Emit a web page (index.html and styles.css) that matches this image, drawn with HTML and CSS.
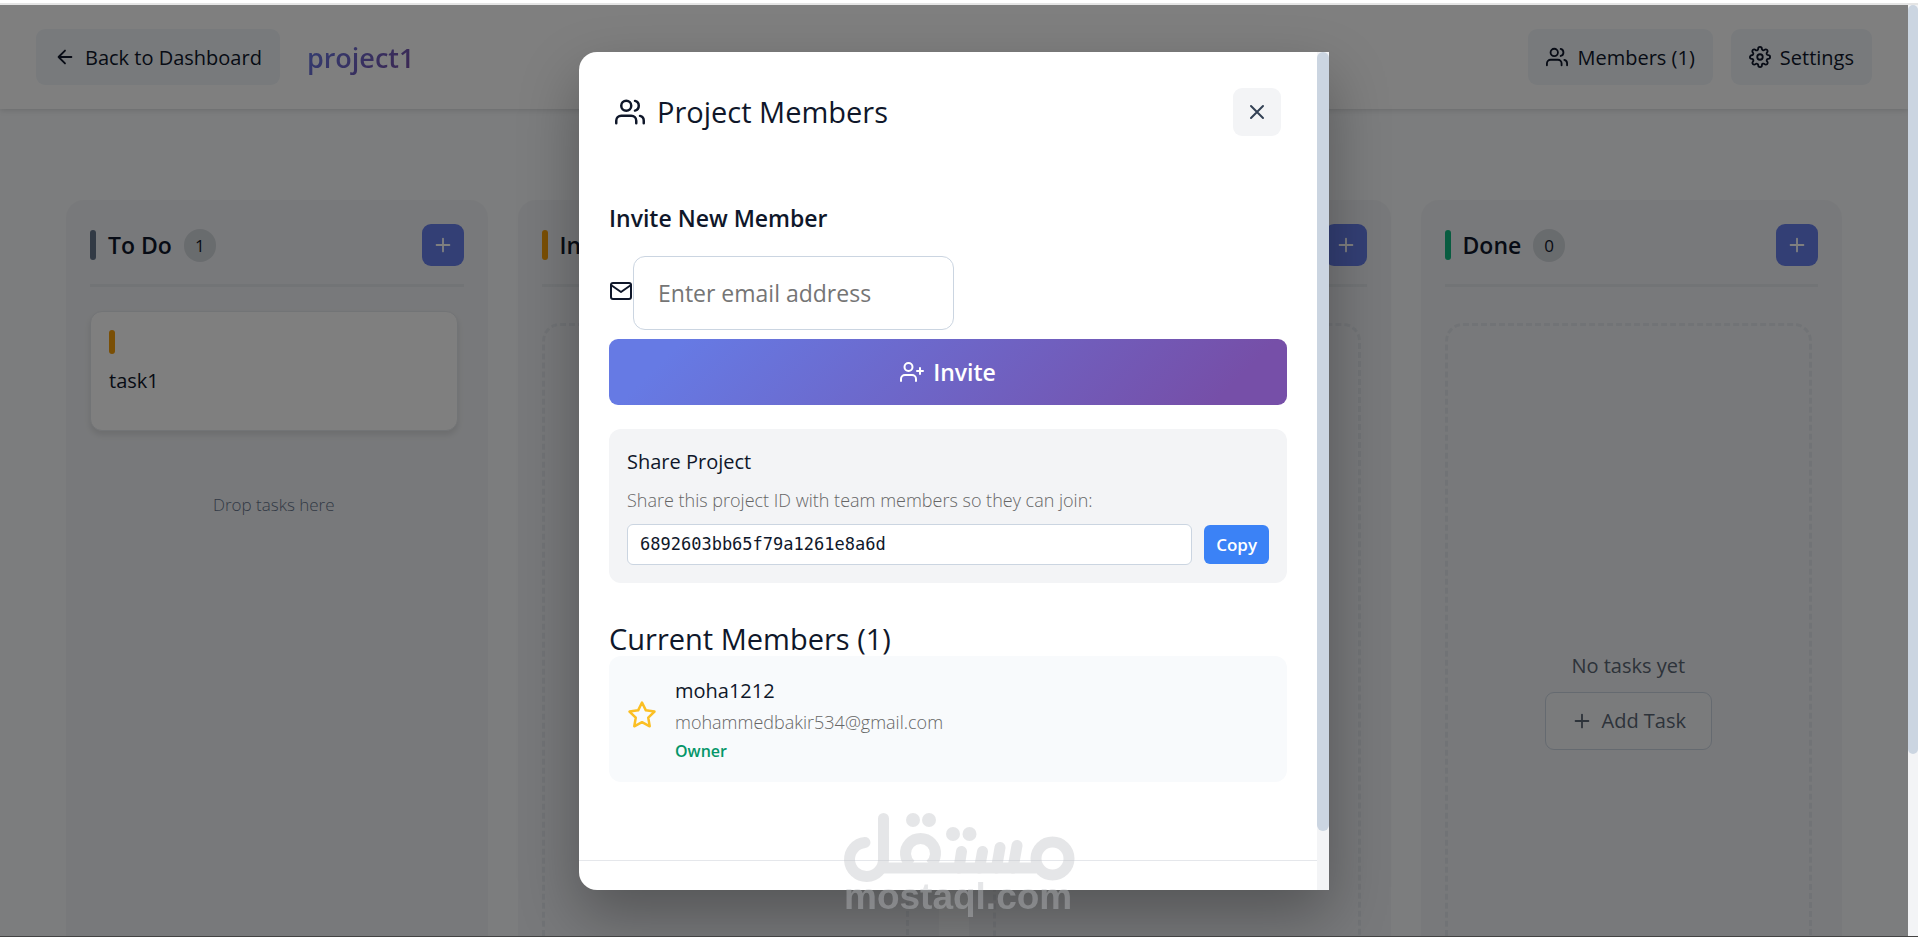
FILE: index.html
```html
<!DOCTYPE html>
<html lang="en">
  <head>
    <meta charset="UTF-8" />
    <meta name="viewport" content="width=device-width, initial-scale=1.0" />
    <title>project1</title>
    <link rel="stylesheet" href="styles.css" />
  </head>
  <body>
    <svg class="icon-defs" aria-hidden="true">
      <symbol id="icon-users" viewBox="0 0 24 24">
        <path d="M17 21v-2a4 4 0 0 0-4-4H5a4 4 0 0 0-4 4v2" />
        <circle cx="9" cy="7" r="4" />
        <path d="M23 21v-2a4 4 0 0 0-3-3.87" />
        <path d="M16 3.13a4 4 0 0 1 0 7.75" />
      </symbol>
      <symbol id="icon-plus" viewBox="0 0 24 24">
        <path d="M12 5v14M5 12h14" />
      </symbol>
    </svg>

    <div class="window">
      <div class="page">
        <header class="board-header">
          <div class="header-group">
            <button type="button" class="header-button">
              <svg class="icon" viewBox="0 0 24 24">
                <path d="M19 12H5M12 19l-7-7 7-7" />
              </svg>
              Back to Dashboard
            </button>
            <h1 class="project-title">project1</h1>
          </div>
          <div class="header-group">
            <button type="button" class="header-button">
              <svg class="icon"><use href="#icon-users" /></svg>
              Members (1)
            </button>
            <button type="button" class="header-button">
              <svg class="icon" viewBox="0 0 24 24">
                <circle cx="12" cy="12" r="3" />
                <path d="M19.4 15a1.65 1.65 0 0 0 .33 1.82l.06.06a2 2 0 0 1 0 2.83 2 2 0 0 1-2.83 0l-.06-.06a1.65 1.65 0 0 0-1.82-.33 1.65 1.65 0 0 0-1 1.51V21a2 2 0 0 1-2 2 2 2 0 0 1-2-2v-.09A1.65 1.65 0 0 0 9 19.4a1.65 1.65 0 0 0-1.82.33l-.06.06a2 2 0 0 1-2.83 0 2 2 0 0 1 0-2.83l.06-.06a1.65 1.65 0 0 0 .33-1.82 1.65 1.65 0 0 0-1.51-1H3a2 2 0 0 1-2-2 2 2 0 0 1 2-2h.09A1.65 1.65 0 0 0 4.6 9a1.65 1.65 0 0 0-.33-1.82l-.06-.06a2 2 0 0 1 0-2.83 2 2 0 0 1 2.83 0l.06.06a1.65 1.65 0 0 0 1.82.33H9a1.65 1.65 0 0 0 1-1.51V3a2 2 0 0 1 2-2 2 2 0 0 1 2 2v.09a1.65 1.65 0 0 0 1 1.51 1.65 1.65 0 0 0 1.82-.33l.06-.06a2 2 0 0 1 2.83 0 2 2 0 0 1 0 2.83l-.06.06a1.65 1.65 0 0 0-.33 1.82V9a1.65 1.65 0 0 0 1.51 1H21a2 2 0 0 1 2 2 2 2 0 0 1-2 2h-.09a1.65 1.65 0 0 0-1.51 1z" />
              </svg>
              Settings
            </button>
          </div>
        </header>

        <main class="board">
          <section class="column">
            <div class="column-header">
              <span class="column-bar todo"></span>
              <h2>To Do</h2>
              <span class="count">1</span>
              <button type="button" class="add-button" aria-label="Add task">
                <svg class="icon"><use href="#icon-plus" /></svg>
              </button>
            </div>
            <div class="column-body">
              <article class="task-card">
                <span class="priority"></span>
                <h3>task1</h3>
              </article>
              <p class="drop-hint">Drop tasks here</p>
            </div>
          </section>

          <section class="column">
            <div class="column-header">
              <span class="column-bar progress"></span>
              <h2>In Progress</h2>
              <span class="count">0</span>
              <button type="button" class="add-button" aria-label="Add task">
                <svg class="icon"><use href="#icon-plus" /></svg>
              </button>
            </div>
            <div class="column-body">
              <div class="empty-column"></div>
            </div>
          </section>

          <section class="column">
            <div class="column-header">
              <span class="column-bar review"></span>
              <h2>Review</h2>
              <span class="count">0</span>
              <button type="button" class="add-button" aria-label="Add task">
                <svg class="icon"><use href="#icon-plus" /></svg>
              </button>
            </div>
            <div class="column-body">
              <div class="empty-column"></div>
            </div>
          </section>

          <section class="column">
            <div class="column-header">
              <span class="column-bar done"></span>
              <h2>Done</h2>
              <span class="count">0</span>
              <button type="button" class="add-button" aria-label="Add task">
                <svg class="icon"><use href="#icon-plus" /></svg>
              </button>
            </div>
            <div class="column-body">
              <div class="empty-column">
                <p>No tasks yet</p>
                <button type="button" class="add-task">
                  <svg class="icon"><use href="#icon-plus" /></svg>
                  Add Task
                </button>
              </div>
            </div>
          </section>
        </main>

        <div class="overlay">
          <div class="modal" role="dialog" aria-labelledby="modal-title">
            <div class="modal-content">
              <div class="modal-header">
                <h2 id="modal-title" class="modal-heading">
                  <svg class="icon"><use href="#icon-users" /></svg>
                  Project Members
                </h2>
                <button type="button" class="close-button" aria-label="Close">
                  <svg class="icon" viewBox="0 0 24 24">
                    <path d="M18 6L6 18M6 6l12 12" />
                  </svg>
                </button>
              </div>

              <div class="modal-body">
                <form class="invite-form">
                  <h3>Invite New Member</h3>
                  <div class="email-row">
                    <label for="email" aria-label="Email">
                      <svg class="icon" viewBox="0 0 24 24">
                        <path d="M4 4h16c1.1 0 2 .9 2 2v12c0 1.1-.9 2-2 2H4c-1.1 0-2-.9-2-2V6c0-1.1.9-2 2-2z" />
                        <path d="M22 6l-10 7L2 6" />
                      </svg>
                    </label>
                    <input id="email" type="email" placeholder="Enter email address" />
                  </div>
                  <button type="button" class="invite-button">
                    <svg class="icon" viewBox="0 0 24 24">
                      <path d="M16 21v-2a4 4 0 0 0-4-4H5a4 4 0 0 0-4 4v2" />
                      <circle cx="8.5" cy="7" r="4" />
                      <path d="M20 8v6M23 11h-6" />
                    </svg>
                    Invite
                  </button>
                </form>

                <div class="share-box">
                  <h4>Share Project</h4>
                  <p>Share this project ID with team members so they can join:</p>
                  <div class="share-row">
                    <code>6892603bb65f79a1261e8a6d</code>
                    <button type="button" class="copy-button">Copy</button>
                  </div>
                </div>

                <h3 class="modal-heading">Current Members (1)</h3>
                <div class="member">
                  <svg class="icon star" viewBox="0 0 24 24">
                    <path d="M12 2l3.09 6.26L22 9.27l-5 4.87 1.18 6.88L12 17.77l-6.18 3.25L7 14.14 2 9.27l6.91-1.01L12 2z" />
                  </svg>
                  <div class="member-info">
                    <span class="member-name">moha1212</span>
                    <span class="member-email">mohammedbakir534@gmail.com</span>
                    <span class="member-role">Owner</span>
                  </div>
                </div>
              </div>
              <div class="modal-footer"></div>
            </div>
            <div class="scrollbar modal-scrollbar"><div class="thumb"></div></div>
          </div>
        </div>
      </div>
      <div class="scrollbar page-scrollbar"><div class="thumb"></div></div>

      <div class="watermark">
        <svg viewBox="0 0 230 62" fill="none" stroke="currentColor" stroke-width="11">
          <path d="M21 29.500a17 17 0 1 0 18.500 17V5.500" stroke-linecap="round" />
          <path d="M34 55h158" />
          <path d="M67 52a15 15 0 1 1 19 0" />
          <path d="M115 55l2.500-16.500M135.500 55l3-16.500M152.500 55l3.500-20.500M169 55l4-22.500" stroke-linecap="round" />
          <circle cx="208.500" cy="45.500" r="16.500" />
          <g fill="currentColor" stroke="none">
            <circle cx="69" cy="7" r="7" />
            <circle cx="85" cy="7" r="7" />
            <circle cx="109" cy="21" r="7" />
            <circle cx="125.500" cy="21" r="7" />
          </g>
        </svg>
        <span>mostaql.com</span>
      </div>
    </div>
  </body>
</html>
```

FILE: styles.css
```css
* {
  box-sizing: border-box;
}

body {
  margin: 0;
  padding-top: 3px;
  background: #fff;
  color: #0f172a;
  font-family: "Open Sans", "Noto Sans", sans-serif;
}

h1,
h2,
h3,
h4,
p {
  margin: 0;
}

button {
  border: none;
  color: inherit;
  font-family: inherit;
  cursor: pointer;
}

.icon-defs {
  display: none;
}

.icon {
  width: 22px;
  height: 22px;
  flex: none;
  display: block;
  fill: none;
  stroke: currentColor;
  stroke-width: 2;
  stroke-linecap: round;
  stroke-linejoin: round;
}

.window {
  position: relative;
  display: flex;
  height: calc(100vh - 3px);
  border-top: 2px solid #e5e5e5;
  border-bottom: 1px solid #444;
  overflow: hidden;
}

.page {
  position: relative;
  flex: 1;
  overflow: hidden;
  background: #f8fafc;
}

/* header */
.board-header {
  display: flex;
  justify-content: space-between;
  align-items: center;
  padding: 24px 36px;
  background: #fff;
  box-shadow: 0 1px 6px rgba(0, 0, 0, 0.15);
}

.header-group {
  display: flex;
  align-items: center;
  gap: 18px;
}

.header-button {
  display: flex;
  align-items: center;
  gap: 9px;
  height: 56px;
  padding: 0 18px;
  border-radius: 9px;
  background: #f1f5f9;
  font-size: 20px;
  font-weight: 500;
}

.project-title {
  padding-left: 9px;
  font-size: 27px;
  font-weight: 600;
  background: linear-gradient(135deg, #667eea 0%, #764ba2 100%);
  -webkit-background-clip: text;
  background-clip: text;
  color: transparent;
}

/* board */
.board {
  display: grid;
  grid-template-columns: repeat(4, 1fr);
  gap: 30px;
  padding: 91px 66px 0;
}

.column {
  height: 1000px;
  padding: 24px;
  border-radius: 18px;
  background: #f1f3f6;
}

.column-header {
  display: flex;
  align-items: center;
  gap: 12px;
  padding-bottom: 18px;
  border-bottom: 3px solid #e5e8ec;
}

.column-header h2 {
  font-size: 23px;
  font-weight: 600;
}

.column-bar {
  width: 6px;
  height: 30px;
  border-radius: 3px;
}

.todo {
  background: #64748b;
}

.progress {
  background: #f59e0b;
}

.review {
  background: #3b82f6;
}

.done {
  background: #10b981;
}

.count {
  padding: 5px 11px;
  border-radius: 18px;
  background: #d3d8dd;
  font-size: 17px;
  font-weight: 500;
  line-height: 23px;
}

.add-button {
  display: flex;
  justify-content: center;
  align-items: center;
  width: 42px;
  height: 42px;
  margin-left: auto;
  padding: 0;
  border-radius: 9px;
  background: #667eea;
  color: #fff;
}

.column-body {
  padding: 24px 6px 0 0;
}

.task-card {
  height: 120px;
  padding: 18px;
  border: 1px solid #e5e8ec;
  border-radius: 12px;
  background: #fff;
  box-shadow: 0 4px 6px rgba(0, 0, 0, 0.1);
}

.priority {
  display: block;
  width: 6px;
  height: 24px;
  border-radius: 3px;
  background: #f59e0b;
}

.task-card h3 {
  margin-top: 13px;
  font-size: 20px;
  font-weight: 500;
}

.drop-hint {
  margin-top: 62px;
  color: #64748b;
  font-size: 17px;
  font-weight: 300;
  text-align: center;
}

.empty-column {
  display: flex;
  flex-direction: column;
  align-items: center;
  justify-content: center;
  gap: 13px;
  height: 755px;
  margin-top: 12px;
  border: 3px dashed #e3e7ec;
  border-radius: 18px;
  color: #5b6675;
  font-size: 20px;
}

.add-task {
  display: flex;
  align-items: center;
  gap: 9px;
  height: 58px;
  padding: 0 25px;
  border: 1px solid #cbd5e1;
  border-radius: 9px;
  background: #f5f7f9;
  font-size: 20px;
  font-weight: 500;
}

/* members dialog */
.overlay {
  position: absolute;
  inset: 0;
  display: flex;
  align-items: center;
  justify-content: center;
  padding-top: 1px;
  background: rgba(0, 0, 0, 0.5);
}

.modal {
  display: flex;
  width: 750px;
  max-width: 90%;
  height: calc(100% - 92px);
  border-radius: 18px 0 0 18px;
  overflow: hidden;
  background: #fff;
  box-shadow: 0 25px 60px rgba(0, 0, 0, 0.3);
}

.modal-content {
  flex: 1;
  overflow: hidden;
}

.modal-header {
  display: flex;
  justify-content: space-between;
  align-items: center;
  padding: 36px;
}

.modal-heading {
  display: flex;
  align-items: center;
  gap: 12px;
  font-size: 29px;
  font-weight: 500;
  line-height: 34px;
}

.modal-heading .icon {
  width: 30px;
  height: 30px;
}

.close-button {
  display: flex;
  align-items: center;
  justify-content: center;
  width: 48px;
  height: 48px;
  padding: 0;
  border-radius: 9px;
  background: #f3f4f6;
  color: #334155;
}

.close-button .icon,
.email-row .icon,
.invite-button .icon {
  width: 24px;
  height: 24px;
}

.modal-body {
  padding: 30px;
}

.invite-form h3 {
  font-size: 23px;
  font-weight: 600;
  line-height: 32px;
}

.email-row {
  display: flex;
  align-items: center;
  margin: 22px 0 9px;
}

.email-row label {
  padding-bottom: 4px;
}

.email-row input {
  width: 321px;
  height: 74px;
  padding: 0 24px;
  border: 1px solid #cbd5e1;
  border-radius: 12px;
  color: inherit;
  font-family: inherit;
  font-size: 23px;
}

.email-row input::placeholder {
  color: #757575;
}

.invite-button {
  display: flex;
  align-items: center;
  justify-content: center;
  gap: 9px;
  width: 100%;
  height: 66px;
  border-radius: 9px;
  background: linear-gradient(135deg, #667ae4 10%, #764fa8 90%);
  color: #fff;
  font-size: 23px;
  font-weight: 600;
}

.share-box {
  margin: 24px 0 39px;
  padding: 18px;
  border-radius: 12px;
  background: #f3f4f6;
}

.share-box h4 {
  font-size: 20px;
  font-weight: 500;
  line-height: 30px;
}

.share-box p {
  margin: 9px 0 10px;
  color: #666;
  font-size: 18px;
  font-weight: 300;
  line-height: 28px;
}

.share-row {
  display: flex;
  align-items: center;
  gap: 12px;
}

.share-row code {
  flex: 1;
  padding: 0 12px;
  border: 1px solid #cbd5e1;
  border-radius: 6px;
  background: #fff;
  font-family: "DejaVu Sans Mono", monospace;
  font-size: 17px;
  line-height: 39px;
}

.copy-button {
  height: 39px;
  padding: 0 12px;
  border-radius: 6px;
  background: #3b82f6;
  color: #fff;
  font-size: 17px;
  font-weight: 600;
}

.member {
  display: flex;
  align-items: center;
  gap: 18px;
  padding: 18px;
  border-radius: 12px;
  background: #f8fafc;
}

.star {
  width: 30px;
  height: 30px;
  margin-bottom: 9px;
  color: #fbbf24;
}

.member-info {
  display: flex;
  flex-direction: column;
}

.member-name {
  font-size: 20px;
  font-weight: 500;
  line-height: 33px;
}

.member-email {
  color: #666;
  font-size: 18px;
  font-weight: 300;
  line-height: 31px;
}

.member-role {
  color: #059669;
  font-size: 16px;
  font-weight: 600;
  line-height: 26px;
}

.modal-footer {
  height: 96px;
  margin-top: 48px;
  border-top: 1px solid #e5e7eb;
}

/* scrollbars */
.scrollbar {
  flex: none;
  background: #f3f4f6;
}

.thumb {
  border-radius: 6px;
  background: #cbd5e1;
}

.page-scrollbar {
  width: 10px;
}

.page-scrollbar .thumb {
  height: 80.5%;
}

.modal-scrollbar {
  width: 12px;
}

.modal-scrollbar .thumb {
  height: 93%;
}

.watermark {
  position: absolute;
  left: 50%;
  bottom: 17px;
  width: 230px;
  margin-left: -115px;
  color: #c0c2c6;
  opacity: 0.4;
  font-family: "Liberation Sans", sans-serif;
  font-size: 37px;
  font-weight: 700;
  line-height: 44px;
}

.watermark svg {
  display: block;
  overflow: visible;
}
```
